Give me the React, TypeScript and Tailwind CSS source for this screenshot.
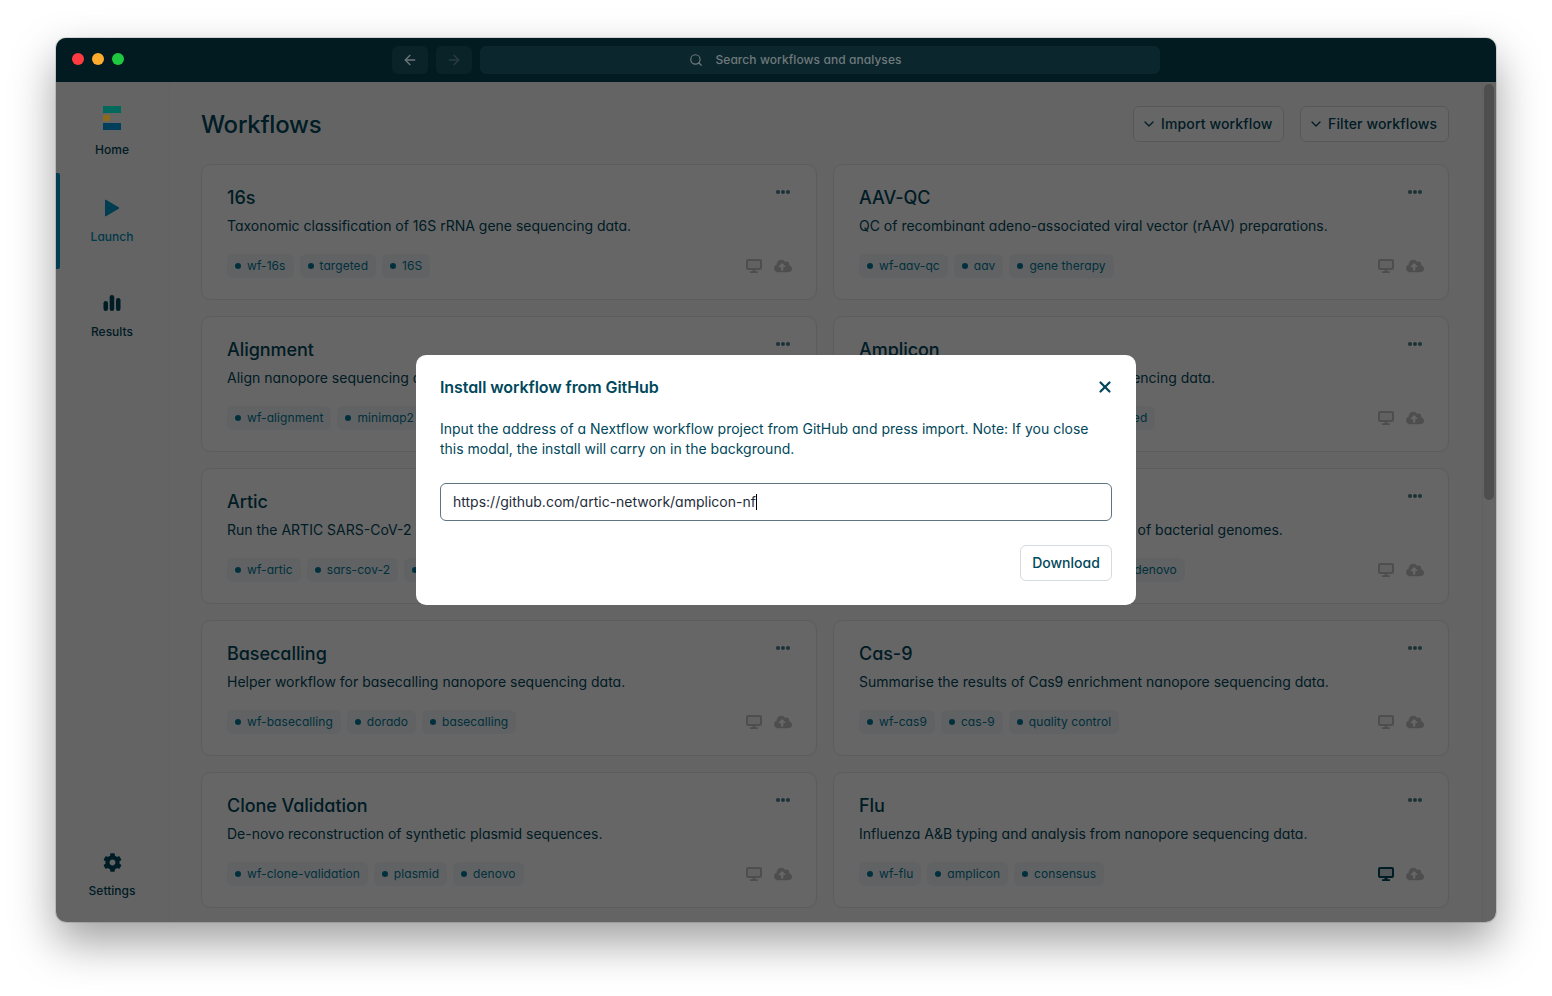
import React from 'react';
import { ArrowLeft, ArrowRight, ChevronDown, Search, X } from 'lucide-react';
import { FaCloudUploadAlt, FaCog } from 'react-icons/fa';

type Workflow = { title: string; desc: string; tags: string[]; local?: boolean };

const workflows: Workflow[] = [
  { title: '16s', desc: 'Taxonomic classification of 16S rRNA gene sequencing data.', tags: ['wf-16s', 'targeted', '16S'] },
  { title: 'AAV-QC', desc: 'QC of recombinant adeno-associated viral vector (rAAV) preparations.', tags: ['wf-aav-qc', 'aav', 'gene therapy'] },
  { title: 'Alignment', desc: 'Align nanopore sequencing data and visualize mapping statistics.', tags: ['wf-alignment', 'minimap2', 'qc'] },
  { title: 'Amplicon', desc: 'Make the consensus from amplicon sequencing data.', tags: ['wf-amplicon', 'amplicon', 'deduplicated'] },
  { title: 'Artic', desc: 'Run the ARTIC SARS-CoV-2 sequencing analysis workflow on your data.', tags: ['wf-artic', 'sars-cov-2', 'artic', 'covid'] },
  { title: 'Bacterial Genomes', desc: 'Assembly, variant calling, and annotation of bacterial genomes.', tags: ['wf-bacterial-genomes', 'bacterium', 'denovo'] },
  { title: 'Basecalling', desc: 'Helper workflow for basecalling nanopore sequencing data.', tags: ['wf-basecalling', 'dorado', 'basecalling'] },
  { title: 'Cas-9', desc: 'Summarise the results of Cas9 enrichment nanopore sequencing data.', tags: ['wf-cas9', 'cas-9', 'quality control'] },
  { title: 'Clone Validation', desc: 'De-novo reconstruction of synthetic plasmid sequences.', tags: ['wf-clone-validation', 'plasmid', 'denovo'] },
  { title: 'Flu', desc: 'Influenza A&B typing and analysis from nanopore sequencing data.', tags: ['wf-flu', 'amplicon', 'consensus'], local: true },
];

// drawn above the dim layer, the reference keeps it saturated
const Logo = () => (
  <div className="relative z-10 flex w-[18px] flex-col gap-[2px]">
    <div className="h-[6.5px] w-[18px] bg-[#00695c]" />
    <div className="h-[6.5px] w-[7px] bg-[#8a6a1f]" />
    <div className="h-[6.5px] w-[18px] bg-[#003f5c]" />
  </div>
);

const PlayIcon = () => (
  <svg width="16" height="18" viewBox="0 0 16 18">
    <path d="M1.5 1v16L15 9z" fill="#0098c8" stroke="#0098c8" strokeLinejoin="round" />
  </svg>
);

const BarsIcon = () => (
  <svg width="18" height="16" viewBox="0 0 18 16" fill="#00485b">
    <rect x="0.5" y="6" width="4.5" height="10" rx="2.2" />
    <rect x="6.7" y="0" width="4.5" height="16" rx="2.2" />
    <rect x="13" y="3" width="4.5" height="13" rx="2.2" />
  </svg>
);

const MonitorIcon = ({ className }: { className: string }) => (
  <svg width="16" height="14" viewBox="0 0 16 14" className={className}>
    <rect x="1" y="1" width="14" height="9" rx="1" fill="currentColor" fillOpacity="0.2" stroke="currentColor" strokeWidth="2" />
    <path d="M6.5 11h3v1.2H6.5z M4 12.2h8V14H4z" fill="currentColor" />
  </svg>
);

const Card = ({ w }: { w: Workflow }) => (
  <div className="relative h-[136px] rounded-[10px] border border-[#e6e6e6] bg-white px-[25px] pt-[19px]">
    <h2 className="text-[18px] leading-[28px] font-[550] tracking-[-0.003em] text-[#00485b]">{w.title}</h2>
    <p className="mt-[4px] text-[14px] leading-[20px] text-[#00485b]">{w.desc}</p>
    <div className="mt-[18px] flex gap-[6px]">
      {w.tags.map((t) => (
        <span key={t} className="flex h-[24px] items-center gap-[6px] rounded-[6px] bg-[#f1f6f7] px-[8px] text-[12px] tracking-[0.006em] text-[#00789a]">
          <span className="h-[6px] w-[6px] rounded-full bg-[#00789a]" />
          {t}
        </span>
      ))}
    </div>
    <div className="absolute top-[25px] right-[26px] flex gap-[1px]">
      <span className="h-[4px] w-[4px] rounded-full bg-[#4a7a88]" />
      <span className="h-[4px] w-[4px] rounded-full bg-[#4a7a88]" />
      <span className="h-[4px] w-[4px] rounded-full bg-[#4a7a88]" />
    </div>
    <div className="absolute right-[24px] bottom-[24px] flex items-center gap-[12px]">
      <MonitorIcon className={w.local ? 'text-[#00485b]' : 'text-[#c4c4c4]'} />
      <FaCloudUploadAlt size={18} className="text-[#c4c4c4]" />
    </div>
  </div>
);

const NavItem = ({ icon, label, className, labelClass, active }: { icon: React.ReactNode; label: string; className: string; labelClass: string; active?: boolean }) => (
  <div className={`relative flex flex-col items-center pr-[1px] ${className}`}>
    {active && <div className="absolute top-0 bottom-0 left-0 w-[4px] rounded-r-[2px] bg-[#0098c8]" />}
    <div className="flex h-[24px] items-center justify-center">{icon}</div>
    <span className={`text-[12px] leading-[16px] font-medium ${labelClass} ${active ? 'text-[#0090b8]' : 'text-[#00485b]'}`}>{label}</span>
  </div>
);

const TopButton = ({ label, className }: { label: string; className: string }) => (
  <button className={`flex h-[36px] items-center gap-[4px] rounded-[6px] border border-[#d5dce0] bg-white pb-[1px] pl-[7px] text-[14px] font-medium tracking-[0.01em] text-[#00485b] ${className}`}>
    <ChevronDown size={16} strokeWidth={2} />
    {label}
  </button>
);

export default function App() {
  return (
    <div className="h-[996px] w-[1552px] overflow-hidden bg-white pt-[38px] pl-[56px] font-['Inter',sans-serif] [font-feature-settings:'cv11']">
      <div className="relative flex h-[884px] w-[1440px] flex-col overflow-hidden rounded-[10px] bg-[#fafafa] shadow-[0_0_0_1px_rgba(0,0,0,0.12),0_20px_45px_rgba(0,0,0,0.38)]">
        {/* title bar stays above the dim layer */}
        <div className="relative z-10 flex h-[44px] shrink-0 items-center bg-[#011b21]">
          <div className="ml-[16px] flex w-[320px] gap-[8px] pb-[2px]">
            <span className="h-[12px] w-[12px] rounded-full bg-[#ff3b42]" />
            <span className="h-[12px] w-[12px] rounded-full bg-[#ffab2e]" />
            <span className="h-[12px] w-[12px] rounded-full bg-[#1fc93f]" />
          </div>
          <div className="flex h-[28px] w-[36px] items-center justify-center rounded-[6px] bg-[#0a2329]">
            <ArrowLeft size={16} className="text-[#6e7679]" />
          </div>
          <div className="ml-[8px] flex h-[28px] w-[36px] items-center justify-center rounded-[6px] bg-[#0a2329]">
            <ArrowRight size={16} className="text-[#2b3d42]" />
          </div>
          <div className="ml-[8px] flex h-[28px] w-[680px] items-center justify-center gap-[12px] rounded-[6px] bg-[#0c262d] pr-[49px] text-[12px] font-medium tracking-[0.006em] text-[#6f7a7c]">
            <Search size={14} />
            Search workflows and analyses
          </div>
        </div>

        <div className="flex min-h-0 flex-1">
          <aside className="flex w-[114px] shrink-0 flex-col border-r border-[#f3f3f3] pb-[23px]">
            <NavItem icon={<Logo />} label="Home" className="h-[91px] pt-[24px]" labelClass="mt-[12px]" />
            <NavItem icon={<PlayIcon />} label="Launch" className="h-[96px] pt-[23px]" labelClass="mt-[9px]" active />
            <NavItem icon={<BarsIcon />} label="Results" className="h-[96px] pt-[22px]" labelClass="mt-[9px]" />
            <div className="mt-auto">
              <NavItem icon={<FaCog size={19} className="text-[#00485b]" />} label="Settings" className="" labelClass="mt-[9px]" />
            </div>
          </aside>

          <main className="min-w-0 flex-1 overflow-hidden pt-[24px] pr-[33px] pl-[31px]">
            <div className="flex h-[36px] items-center justify-between">
              <h1 className="pt-[1px] text-[24px] font-medium tracking-[-0.01em] text-[#00485b]">Workflows</h1>
              <div className="flex gap-[16px]">
                <TopButton label="Import workflow" className="w-[151px]" />
                <TopButton label="Filter workflows" className="w-[149px]" />
              </div>
            </div>
            <div className="mt-[22px] grid grid-cols-2 gap-[16px]">
              {workflows.map((w) => (
                <Card key={w.title} w={w} />
              ))}
            </div>
          </main>

          <div className="w-[14px] shrink-0 border-l border-[#f0f0f0] bg-[#fafafa] pt-[2px] pl-[1px]">
            <div className="h-[416px] w-[10px] rounded-full bg-[#c2c2c2]" />
          </div>
        </div>

        <div className="absolute inset-0 bg-black/60" />

        <div className="absolute top-[317px] left-[360px] z-20 h-[250px] w-[720px] rounded-[10px] bg-white p-[24px] text-[#00485b]">
          <div className="flex h-[16px] items-center justify-between">
            <h3 className="text-[16px] font-semibold tracking-[-0.005em]">Install workflow from GitHub</h3>
            <X size={18} strokeWidth={3} className="mr-[-2px]" />
          </div>
          <p className="mt-[24px] text-[14px] leading-[20px]">
            Input the address of a Nextflow workflow project from GitHub and press import. Note: If you close this modal, the install will carry on in the background.
          </p>
          <div className="mt-[24px] flex h-[38px] items-center rounded-[6px] border border-[#5f7380] px-[12px] pb-[1px] text-[14px] text-[#1f2d3a]">
            https://github.com/artic-network/amplicon-nf
            <span className="h-[16px] w-px bg-black" />
          </div>
          <div className="mt-[24px] flex justify-end">
            <button className="h-[36px] w-[92px] rounded-[6px] border border-[#d5dce0] bg-white pb-[2px] text-[14px] font-medium">Download</button>
          </div>
        </div>
      </div>
    </div>
  );
}
